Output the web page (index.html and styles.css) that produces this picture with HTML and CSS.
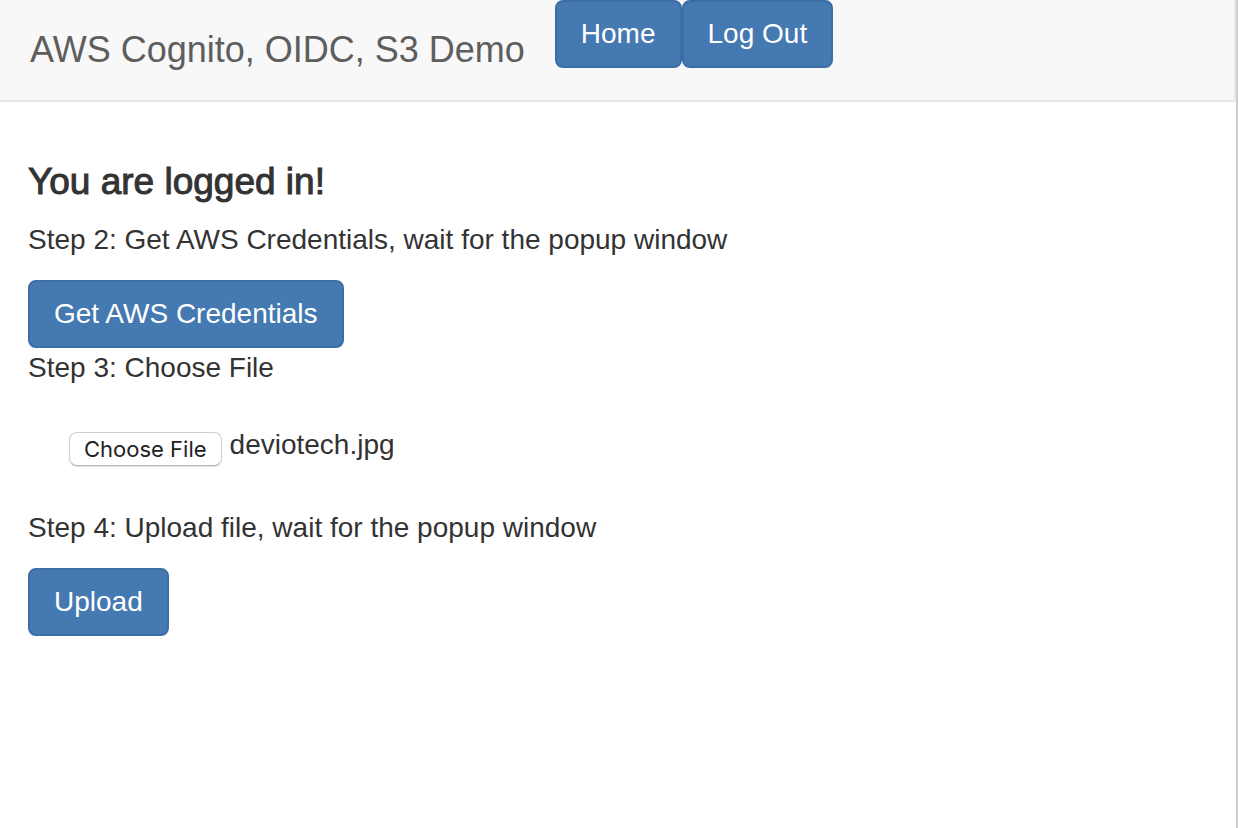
FILE: index.html
```html
<!DOCTYPE html>
<html lang="en">
<head>
  <meta charset="utf-8">
  <title>AWS Cognito, OIDC, S3 Demo</title>
  <link rel="stylesheet" href="styles.css">
</head>
<body>
  <nav class="navbar">
    <a class="brand" href="#">AWS Cognito, OIDC, S3 Demo</a>
    <div class="nav-buttons">
      <button class="btn" type="button">Home</button>
      <button class="btn" type="button">Log Out</button>
    </div>
  </nav>
  <main class="content">
    <h4 class="title">You are logged in!</h4>
    <p class="step">Step 2: Get AWS Credentials, wait for the popup window</p>
    <button class="btn" type="button">Get AWS Credentials</button>
    <p class="step">Step 3: Choose File</p>
    <div class="file-row">
      <input class="file-input" type="file" id="upload-file">
      <label class="file-button" for="upload-file">Choose File</label>
      <span class="file-name">deviotech.jpg</span>
    </div>
    <p class="step">Step 4: Upload file, wait for the popup window</p>
    <button class="btn" type="button">Upload</button>
  </main>
</body>
</html>
```
FILE: styles.css
```css
* {
  box-sizing: border-box;
}

body {
  margin: 0;
  min-height: 100vh;
  border-right: 2px solid #cecece;
  background: #fff;
  color: #333;
  font-family: "Liberation Sans", Arial, sans-serif;
  font-size: 28px;
  line-height: 40px;
}

.navbar {
  display: flex;
  align-items: flex-start;
  background: #f8f8f8;
  border-right: 2px solid #e7e7e7;
  border-bottom: 2px solid #e7e7e7;
}

.brand {
  padding: 30px;
  color: #5e5e5e;
  font-size: 36px;
  text-decoration: none;
}

.nav-buttons {
  display: flex;
}

.btn {
  display: block;
  padding: 12px 24px;
  border: 2px solid #3d6da5;
  border-radius: 8px;
  background: #4579b2;
  color: #fff;
  font: inherit;
  cursor: pointer;
}

.content {
  padding: 60px 28px;
}

.title {
  margin: 0 0 18px;
  font-size: 37px;
  font-weight: 400;
  -webkit-text-stroke: 1px #333;
}

.step {
  margin: 0 0 20px;
}

.file-row {
  position: relative;
  display: flex;
  align-items: flex-start;
  gap: 8px;
  margin-bottom: 20px;
  padding: 20px 41px;
}

.file-input {
  position: absolute;
  width: 1px;
  height: 1px;
  opacity: 0;
}

.file-button {
  margin: 4px 0 2px;
  padding: 0 14px;
  border: 1px solid #cfcfcf;
  border-bottom-color: #b4b4b4;
  border-radius: 8px;
  background: #fff;
  box-shadow: 0 1px 1px #e2e2e2;
  color: #222;
  font-family: Inter, sans-serif;
  font-size: 22px;
  line-height: 32px;
}

.file-name {
  line-height: 34px;
}
```
